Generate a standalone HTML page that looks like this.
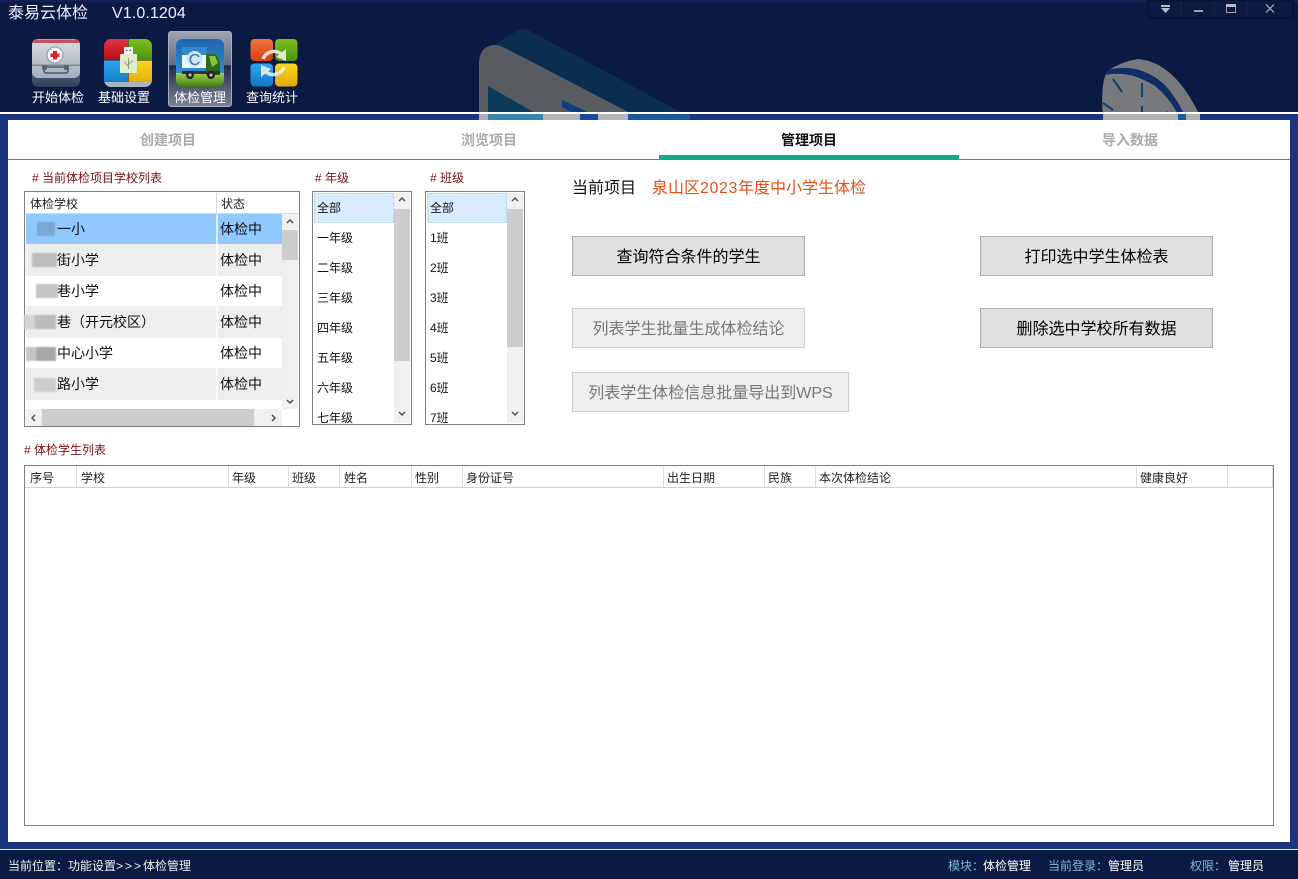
<!DOCTYPE html>
<html lang="zh"><head><meta charset="utf-8"><title>泰易云体检</title>
<style>
*{box-sizing:border-box}
html,body{margin:0;padding:0;width:1298px;height:879px;overflow:hidden;background:#1a3480;font-family:"Liberation Sans","Noto Sans CJK SC",sans-serif;color:#000}
.a{position:absolute}
.t{position:absolute;white-space:nowrap;line-height:20px;height:20px}
.tool{color:#fff;font-size:13px;width:70px;text-align:center;top:88px}
.tab{font-size:14px;font-weight:bold;color:#aaa;top:130px;width:120px;text-align:center}
.h{font-size:12px;color:#7a1010}
.r{font-size:14px;color:#111}
.li{font-size:12px;color:#111}
.th{font-size:12px;color:#222;top:468px}
.sep{position:absolute;top:466px;height:21px;width:1px;background:#dcdcdc}
.btn{position:absolute;height:40px;background:#e0e0e0;border:1px solid #adadad;font-size:16px;line-height:41px;text-align:center;white-space:nowrap;color:#000}
.dis{background:#efefef;border-color:#ccc;color:#777}
.f{font-size:12px;top:856px;color:#eee}
.k{color:#7fb8d8}
.p{position:absolute;filter:blur(.8px)}
</style></head><body>

<!-- header -->
<div class="a" style="left:0;top:0;width:1298px;height:112px;background:linear-gradient(#14235a 0,#0b1a42 3px,#0b1a42 100%)"></div>
<svg class="a" style="left:0;top:0" width="1298" height="112" viewBox="0 0 1298 112">
<path d="M495 44 L515 32 Q523 27 532 32 L690 117 L640 117 Z" fill="#0a2d50"/>
<path d="M479 118 V62 Q480 46 494 45 Q499 45 505 48 L640 118 Z" fill="#585c60"/>
<path d="M488 86 L544 118 H488 Z" fill="#0e3a5c"/>
<path d="M562 100 V107 L580 117 H598 Z" fill="#0f3f80"/>
<path d="M1103 118 Q1100 80 1108 71 Q1120 62 1138 59 Q1175 62 1201 118 Z" fill="#78797c"/>
<path d="M1108 70 Q1140 62 1165 85 Q1178 100 1186 118 L1180 118 Q1170 98 1155 86 Q1130 70 1106 75 Z" fill="#0e2f66"/>
<path d="M1113 79 L1122 92 M1142 83 V97 M1103 103 L1113 110 M1142 106 V118 M1168 112 L1162 116" stroke="#0f3f78" stroke-width="2" fill="none"/>
<path d="M1148 0 V14 Q1148 18 1152 18 H1289 Q1293 18 1293 14 V0 Z" fill="#0c1a42" stroke="#050d28" stroke-width="1"/>
<path d="M1181 1V15M1214 1V15M1247 1V15" stroke="#15244f" stroke-width="1"/>
<rect x="1161" y="5" width="9" height="2" fill="#b8bcc8"/><path d="M1161 8 H1170 L1165.500 13 Z" fill="#b8bcc8"/>
<rect x="1194" y="10" width="9" height="2" fill="#9aa0b0"/>
<rect x="1226.500" y="4.500" width="9" height="8" fill="none" stroke="#9aa0b0"/><rect x="1226" y="4" width="10" height="3" fill="#b8bcc8"/>
<path d="M1266 4.500 L1274 12.500 M1274 4.500 L1266 12.500" stroke="#aab0c0" stroke-width="1.200"/>
</svg>
<div class="t" style="left:8px;top:4px;font-size:16px;color:#eef">泰易云体检</div>
<div class="t" style="left:112px;top:4px;font-size:16px;color:#eef;letter-spacing:.1px">V1.0.1204</div>

<!-- selected tool -->
<div class="a" style="left:168px;top:31px;width:64px;height:76px;border:1px solid #a8aebc;border-radius:3px;background:linear-gradient(#9ea4b4 0,#646c80 44%,#1e2a4c 46%,#3a4460 60%,#7c8292 100%)"></div>

<!-- icon 1 -->
<svg class="a" style="left:32px;top:39px" width="48" height="48" viewBox="0 0 48 48">
<defs><linearGradient id="g1" x1="0" y1="0" x2="0" y2="1"><stop offset="0" stop-color="#d6dce2"/><stop offset="1" stop-color="#a4aeb8"/></linearGradient>
<linearGradient id="g2" x1="0" y1="0" x2="0" y2="1"><stop offset="0" stop-color="#5c7490"/><stop offset="1" stop-color="#2c3c54"/></linearGradient></defs>
<rect x="0" y="28" width="48" height="20" rx="6" fill="url(#g2)"/>
<rect x="0" y="0" width="48" height="39" rx="6" fill="url(#g1)"/>
<rect x="1" y="0.500" width="46" height="3.500" rx="1.700" fill="#c8505a"/>
<rect x="0" y="25.500" width="48" height="1.500" fill="#7c8896"/>
<circle cx="23" cy="16" r="8" fill="#f4f5f6" stroke="#8c96a2"/>
<path d="M21 12h4v2.500h2.500v3.500H25v2.500h-4V18h-2.500v-3.500H21z" fill="#d8262c"/>
<rect x="12" y="28" width="24" height="6" rx="2" fill="none" stroke="#4c5a6c" stroke-width="1.600"/>
<rect x="10" y="26" width="5" height="5" rx="1" fill="#5a6678"/><rect x="32" y="26" width="5" height="5" rx="1" fill="#5a6678"/>
</svg>
<!-- icon 2 -->
<svg class="a" style="left:104px;top:39px" width="48" height="48" viewBox="0 0 48 48">
<defs><clipPath id="c2"><rect width="48" height="48" rx="7"/></clipPath>
<linearGradient id="r" x1="0" y1="0" x2="0" y2="1"><stop offset="0" stop-color="#e2343c"/><stop offset="1" stop-color="#b8101c"/></linearGradient>
<linearGradient id="gr" x1="0" y1="0" x2="0" y2="1"><stop offset="0" stop-color="#7cc01c"/><stop offset="1" stop-color="#4a9410"/></linearGradient>
<linearGradient id="b" x1="0" y1="0" x2="0" y2="1"><stop offset="0" stop-color="#2ea8ec"/><stop offset="1" stop-color="#1078c8"/></linearGradient>
<linearGradient id="y" x1="0" y1="0" x2="0" y2="1"><stop offset="0" stop-color="#f8d820"/><stop offset="1" stop-color="#e4a808"/></linearGradient></defs>
<g clip-path="url(#c2)">
<rect width="24" height="21" fill="url(#r)"/><rect x="24.500" width="24" height="21" fill="url(#gr)"/>
<rect y="21.500" width="24" height="24" fill="url(#b)"/><rect x="24.500" y="21.500" width="24" height="24" fill="url(#y)"/>
<rect y="43" width="48" height="5" fill="#a8b4be"/>
<rect x="20" y="8" width="9" height="9" fill="#f4f4f0"/><rect x="22" y="10.500" width="1.500" height="1.500" fill="#666"/><rect x="25.500" y="10.500" width="1.500" height="1.500" fill="#666"/>
<rect x="16" y="15" width="17" height="19" rx="1" fill="#e4ecd0"/>
<path d="M24.500 19 V30 M24.500 27 L21 24 V22 M24.500 25 L28 22.500 V21" stroke="#8aa078" stroke-width="1" fill="none"/>
</g></svg>
<!-- icon 3 -->
<svg class="a" style="left:176px;top:39px" width="48" height="48" viewBox="0 0 48 48">
<defs><clipPath id="c3"><rect width="48" height="48" rx="7"/></clipPath>
<linearGradient id="s" x1="0" y1="0" x2="0" y2="1"><stop offset="0" stop-color="#1c64b0"/><stop offset="1" stop-color="#3a9cdc"/></linearGradient>
<linearGradient id="gs" x1="0" y1="0" x2="0" y2="1"><stop offset="0" stop-color="#a8d050"/><stop offset="1" stop-color="#3c7a10"/></linearGradient></defs>
<g clip-path="url(#c3)">
<rect width="48" height="48" fill="url(#s)"/>
<rect y="34" width="48" height="14" fill="url(#gs)"/>
<rect x="6" y="8" width="25" height="24" fill="#2f8ad0"/>
<rect x="6" y="16" width="25" height="13" fill="#f0f6fa"/>
<circle cx="18.500" cy="20" r="8" fill="#cfe4f4"/>
<text x="18.500" y="26" font-size="16" font-family="Liberation Sans" fill="#2a78c0" text-anchor="middle">C</text>
<path d="M30 15 H40 L44 23 V36 H30 Z" fill="#2f6a1a"/><path d="M33 17 H39 L42 24 L36 28 Z" fill="#88c040"/>
<rect x="6" y="32" width="38" height="3" fill="#333"/>
<circle cx="14" cy="36" r="4" fill="#222"/><circle cx="14" cy="36" r="1.600" fill="#bbb"/>
<circle cx="35" cy="36" r="4" fill="#222"/><circle cx="35" cy="36" r="1.600" fill="#bbb"/>
</g></svg>
<!-- icon 4 -->
<svg class="a" style="left:250px;top:39px" width="48" height="48" viewBox="0 0 48 48">
<defs><linearGradient id="o" x1="0" y1="0" x2="0" y2="1"><stop offset="0" stop-color="#f07838"/><stop offset="1" stop-color="#d83c14"/></linearGradient></defs>
<rect x="0.500" y="0" width="22.500" height="22" rx="4" fill="url(#o)"/>
<rect x="25" y="0" width="22.500" height="22" rx="4" fill="url(#gr)"/>
<rect x="0.500" y="24.500" width="22.500" height="23" rx="4" fill="url(#b)"/>
<rect x="25" y="24.500" width="22.500" height="23" rx="4" fill="url(#y)"/>
<path d="M13 20 A11.500 11.500 0 0 1 31 15" stroke="#eeeee6" stroke-width="3.500" fill="none" opacity=".9"/><path d="M36 10 L36 22 L26 18 Z" fill="#eeeee6" opacity=".9"/>
<path d="M34 28 A11.500 11.500 0 0 1 16 33" stroke="#eeeee6" stroke-width="3.500" fill="none" opacity=".9"/><path d="M11 38 L11 26 L21 30 Z" fill="#eeeee6" opacity=".9"/>
</svg>

<div class="t tool" style="left:23px">开始体检</div>
<div class="t tool" style="left:89px">基础设置</div>
<div class="t tool" style="left:165px">体检管理</div>
<div class="t tool" style="left:237px">查询统计</div>

<!-- divider & strip -->
<div class="a" style="left:0;top:112px;width:1298px;height:2px;background:#fff"></div>
<div class="a" style="left:0;top:114px;width:1298px;height:6px;background:#1a3480"></div>
<svg class="a" style="left:0;top:114px" width="1298" height="6" viewBox="0 0 1298 6">
<rect x="479" width="9" height="6" fill="#aeb0b2"/><rect x="488" width="55" height="6" fill="#3a84ac"/><rect x="543" width="37" height="6" fill="#b4b6b8"/><rect x="580" width="18" height="6" fill="#1a4a98"/><rect x="598" width="30" height="6" fill="#b4b6b8"/><rect x="628" width="62" height="6" fill="#1a5a9c"/>
<rect x="1103" width="97" height="6" fill="#b0b2b4"/><rect x="1178" width="8" height="6" fill="#1a5aa0"/>
</svg>

<!-- main panel -->
<div class="a" style="left:8px;top:120px;width:1282px;height:722px;background:#fff"></div>

<!-- tabs -->
<div class="a" style="left:8px;top:159px;width:1282px;height:1px;background:#2a9d8f"></div>
<div class="a" style="left:659px;top:155px;width:300px;height:4px;background:#10aa8c"></div>
<div class="t tab" style="left:108px">创建项目</div>
<div class="t tab" style="left:429px">浏览项目</div>
<div class="t tab" style="left:749px;color:#111">管理项目</div>
<div class="t tab" style="left:1070px">导入数据</div>

<!-- section heads -->
<div class="t h" style="left:32px;top:168px"># 当前体检项目学校列表</div>
<div class="t h" style="left:315px;top:168px"># 年级</div>
<div class="t h" style="left:430px;top:168px"># 班级</div>
<div class="t h" style="left:24px;top:440px"># 体检学生列表</div>

<!-- school list -->
<div class="a" style="left:24px;top:191px;width:276px;height:236px;border:1px solid #808080;background:#fff"></div>
<div class="a" style="left:26px;top:213px;width:272px;height:1px;background:#d8d8d8"></div>
<div class="a" style="left:216px;top:193px;width:1px;height:20px;background:#d8d8d8"></div>
<div class="t" style="left:30px;top:194px;font-size:12px;color:#222">体检学校</div>
<div class="t" style="left:221px;top:194px;font-size:12px;color:#222">状态</div>
<div class="a" style="left:26px;top:214px;width:256px;height:30px;background:#90c8ff"></div>
<div class="a" style="left:26px;top:244px;width:256px;height:32px;background:#eee"></div>
<div class="a" style="left:26px;top:306px;width:256px;height:32px;background:#eee"></div>
<div class="a" style="left:26px;top:368px;width:256px;height:32px;background:#eee"></div>
<div class="a" style="left:216px;top:214px;width:2px;height:195px;background:#fff;opacity:.7"></div>
<div class="p" style="left:37px;top:222px;width:18px;height:14px;background:#7ba7d3"></div>
<div class="p" style="left:32px;top:253px;width:25px;height:14px;background:#bdbdbd"></div>
<div class="p" style="left:36px;top:284px;width:22px;height:14px;background:#c4c4c4"></div>
<div class="p" style="left:24px;top:315px;width:32px;height:14px;background:linear-gradient(90deg,#d4d4d4 35%,#bbb 35%)"></div>
<div class="p" style="left:26px;top:347px;width:30px;height:14px;background:linear-gradient(90deg,#c4c4c4 35%,#a8a8a8 35%)"></div>
<div class="p" style="left:34px;top:378px;width:22px;height:14px;background:#cdcdcd"></div>
<div class="t r" style="left:57px;top:219px">一小</div>
<div class="t r" style="left:57px;top:250px">街小学</div>
<div class="t r" style="left:57px;top:281px">巷小学</div>
<div class="t r" style="left:57px;top:312px">巷（开元校区）</div>
<div class="t r" style="left:57px;top:343px">中心小学</div>
<div class="t r" style="left:57px;top:374px">路小学</div>
<div class="t r" style="left:220px;top:219px">体检中</div>
<div class="t r" style="left:220px;top:250px">体检中</div>
<div class="t r" style="left:220px;top:281px">体检中</div>
<div class="t r" style="left:220px;top:312px">体检中</div>
<div class="t r" style="left:220px;top:343px">体检中</div>
<div class="t r" style="left:220px;top:374px">体检中</div>
<!-- scrollbars -->
<div class="a" style="left:282px;top:214px;width:16px;height:195px;background:#f0f0f0"></div>
<div class="a" style="left:282px;top:230px;width:16px;height:30px;background:#cdcdcd"></div>
<div class="a" style="left:26px;top:409px;width:256px;height:17px;background:#f0f0f0"></div>
<div class="a" style="left:42px;top:409px;width:212px;height:17px;background:#cdcdcd"></div>
<svg class="a" style="left:0;top:0" width="1298" height="440" viewBox="0 0 1298 440" fill="none" stroke="#505050" stroke-width="1.500">
<path d="M287 223 L290 220 L293 223"/><path d="M287 400 L290 403 L293 400"/>
<path d="M35 415 L32 418 L35 421"/><path d="M272 415 L275 418 L272 421"/>
</svg>

<!-- grade list -->
<div class="a" style="left:312px;top:191px;width:100px;height:234px;border:1px solid #808080;background:#fff;overflow:hidden">
  <div class="a" style="left:1px;top:1px;width:80px;height:30px;background:#d9ecff;border:1px solid #bcdcf4"></div>
  <div class="t li" style="left:4px;top:6px">全部</div>
  <div class="t li" style="left:4px;top:36px">一年级</div>
  <div class="t li" style="left:4px;top:66px">二年级</div>
  <div class="t li" style="left:4px;top:96px">三年级</div>
  <div class="t li" style="left:4px;top:126px">四年级</div>
  <div class="t li" style="left:4px;top:156px">五年级</div>
  <div class="t li" style="left:4px;top:186px">六年级</div>
  <div class="t li" style="left:4px;top:216px">七年级</div>
  <div class="a" style="left:81px;top:1px;width:16px;height:230px;background:#f0f0f0"></div>
  <div class="a" style="left:81px;top:17px;width:16px;height:152px;background:#cdcdcd"></div>
</div>
<!-- class list -->
<div class="a" style="left:425px;top:191px;width:100px;height:234px;border:1px solid #808080;background:#fff;overflow:hidden">
  <div class="a" style="left:1px;top:1px;width:80px;height:30px;background:#d9ecff;border:1px solid #bcdcf4"></div>
  <div class="t li" style="left:4px;top:6px">全部</div>
  <div class="t li" style="left:4px;top:36px">1班</div>
  <div class="t li" style="left:4px;top:66px">2班</div>
  <div class="t li" style="left:4px;top:96px">3班</div>
  <div class="t li" style="left:4px;top:126px">4班</div>
  <div class="t li" style="left:4px;top:156px">5班</div>
  <div class="t li" style="left:4px;top:186px">6班</div>
  <div class="t li" style="left:4px;top:216px">7班</div>
  <div class="a" style="left:81px;top:1px;width:16px;height:230px;background:#f0f0f0"></div>
  <div class="a" style="left:81px;top:17px;width:16px;height:138px;background:#cdcdcd"></div>
</div>
<svg class="a" style="left:0;top:0" width="1298" height="440" viewBox="0 0 1298 440" fill="none" stroke="#505050" stroke-width="1.500">
<path d="M399 201 L402 198 L405 201"/><path d="M399 412 L402 415 L405 412"/>
<path d="M512 201 L515 198 L518 201"/><path d="M512 412 L515 415 L518 412"/>
</svg>

<!-- current project -->
<div class="t" style="left:572px;top:178px;font-size:16px;line-height:22px;color:#111">当前项目</div>
<div class="t" style="left:652px;top:178px;font-size:16px;line-height:22px;color:#e2501a">泉山区<span style="letter-spacing:.6px">2023</span>年度中小学生体检</div>

<!-- buttons -->
<div class="btn" style="left:572px;top:236px;width:233px">查询符合条件的学生</div>
<div class="btn dis" style="left:572px;top:308px;width:233px">列表学生批量生成体检结论</div>
<div class="btn dis" style="left:572px;top:372px;width:277px">列表学生体检信息批量导出到WPS</div>
<div class="btn" style="left:980px;top:236px;width:233px">打印选中学生体检表</div>
<div class="btn" style="left:980px;top:308px;width:233px">删除选中学校所有数据</div>

<!-- table -->
<div class="a" style="left:24px;top:465px;width:1250px;height:361px;border:1px solid #808080;background:#fff"></div>
<div class="a" style="left:25px;top:487px;width:1248px;height:1px;background:#d0d0d0"></div>
<div class="sep" style="left:76px"></div><div class="sep" style="left:228px"></div><div class="sep" style="left:288px"></div><div class="sep" style="left:339px"></div><div class="sep" style="left:411px"></div><div class="sep" style="left:462px"></div><div class="sep" style="left:663px"></div><div class="sep" style="left:764px"></div><div class="sep" style="left:815px"></div><div class="sep" style="left:1136px"></div><div class="sep" style="left:1227px"></div><div class="sep" style="left:1272px"></div>
<div class="t th" style="left:30px">序号</div>
<div class="t th" style="left:81px">学校</div>
<div class="t th" style="left:232px">年级</div>
<div class="t th" style="left:292px">班级</div>
<div class="t th" style="left:344px">姓名</div>
<div class="t th" style="left:415px">性别</div>
<div class="t th" style="left:466px">身份证号</div>
<div class="t th" style="left:667px">出生日期</div>
<div class="t th" style="left:768px">民族</div>
<div class="t th" style="left:819px">本次体检结论</div>
<div class="t th" style="left:1140px">健康良好</div>

<!-- footer -->
<div class="a" style="left:0;top:849px;width:1298px;height:1px;background:#e8ecf4"></div>
<div class="a" style="left:0;top:850px;width:1298px;height:29px;background:#0b1a42"></div>
<div class="t f" style="left:8px">当前位置：功能设置<span style="letter-spacing:2px">&gt;&gt;&gt;</span>体检管理</div>
<div class="t f k" style="left:948px">模块：</div>
<div class="t f" style="left:983px;color:#fff">体检管理</div>
<div class="t f k" style="left:1048px">当前登录：</div>
<div class="t f" style="left:1108px;color:#fff">管理员</div>
<div class="t f k" style="left:1190px">权限：</div>
<div class="t f" style="left:1228px;color:#fff">管理员</div>
</body></html>
